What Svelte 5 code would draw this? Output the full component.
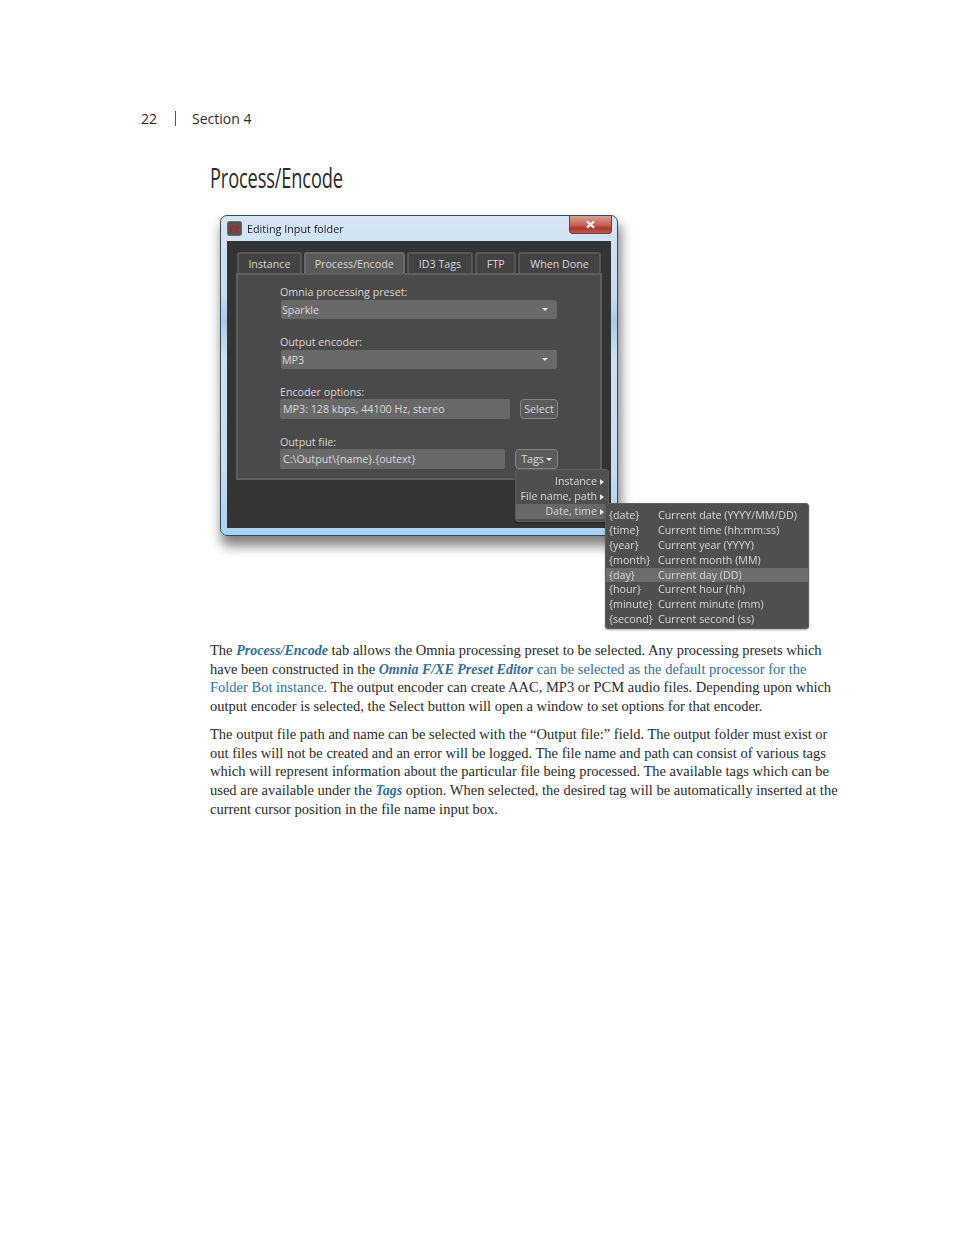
<script lang="ts">
    const tabs = [
        { label: "Instance", width: 65 },
        { label: "Process/Encode", width: 101, active: true },
        { label: "ID3 Tags", width: 67 },
        { label: "FTP", width: 41 },
        { label: "When Done", width: 83 },
    ];

    const tagMenu = [
        { label: "Instance" },
        { label: "File name, path" },
        { label: "Date, time", active: true },
    ];

    const dateTags = [
        { tag: "{date}", text: "Current date (YYYY/MM/DD)" },
        { tag: "{time}", text: "Current time (hh:mm:ss)" },
        { tag: "{year}", text: "Current year (YYYY)" },
        { tag: "{month}", text: "Current month (MM)" },
        { tag: "{day}", text: "Current day (DD)", active: true },
        { tag: "{hour}", text: "Current hour (hh)" },
        { tag: "{minute}", text: "Current minute (mm)" },
        { tag: "{second}", text: "Current second (ss)" },
    ];
</script>

<div class="page">
    <header class="running-head">
        <span class="folio">22</span>
        <span class="rule"></span>
        <span>Section 4</span>
    </header>

    <main class="content">
        <h1>Process/Encode</h1>

        <div class="figure">
            <div class="window">
                <div class="titlebar">
                    <svg class="app-icon" viewBox="0 0 14 14" aria-hidden="true">
                        <rect x="0.5" y="0.5" width="13" height="13" rx="2" fill="#5a5052" stroke="#6a6a6a" />
                        <text x="7" y="10" text-anchor="middle" font-size="8" font-weight="700" font-family="Liberation Sans, sans-serif" fill="#a8242c">F8</text>
                    </svg>
                    <span class="title">Editing Input folder</span>
                    <button class="close" type="button" aria-label="Close">
                        <svg viewBox="0 0 12 10" aria-hidden="true">
                            <path d="M2 1.5 L10 8.5 M10 1.5 L2 8.5" stroke="#ece8e6" stroke-width="2.6" fill="none" />
                        </svg>
                    </button>
                </div>

                <div class="client">
                    <div class="tabs">
                        {#each tabs as tab}
                            <div class="tab" class:active={tab.active} style={`width: ${tab.width}px`}>{tab.label}</div>
                        {/each}
                    </div>
                    <div class="panel">
                        <div class="field">
                            <div class="label">Omnia processing preset:</div>
                            <div class="select"><span>Sparkle</span><i class="caret"></i></div>
                        </div>
                        <div class="field">
                            <div class="label">Output encoder:</div>
                            <div class="select"><span>MP3</span><i class="caret"></i></div>
                        </div>
                        <div class="field">
                            <div class="label">Encoder options:</div>
                            <div class="input-row">
                                <div class="input options">MP3: 128 kbps, 44100 Hz, stereo</div>
                                <button class="btn select-btn" type="button">Select</button>
                            </div>
                        </div>
                        <div class="field">
                            <div class="label">Output file:</div>
                            <div class="input-row">
                                <div class="input outfile">C:\Output\{"{name}"}.{"{outext}"}</div>
                                <button class="btn tags-btn" type="button">Tags<i class="caret small"></i></button>
                            </div>
                        </div>
                    </div>
                </div>
            </div>

            <div class="menu tag-menu">
                {#each tagMenu as item}
                    <div class="menu-row" class:active={item.active}>
                        <span>{item.label}</span><i class="arrow"></i>
                    </div>
                {/each}
            </div>

            <div class="menu date-menu">
                {#each dateTags as item}
                    <div class="date-row" class:active={item.active}>
                        <span class="tag">{item.tag}</span>
                        <span>{item.text}</span>
                    </div>
                {/each}
            </div>
        </div>

        <p>
            <span class="line">The <b>Process/Encode</b> tab allows the Omnia processing preset to be selected. Any processing presets which</span>
            <span class="line">have been constructed in the <b>Omnia F/XE Preset Editor</b> <a href="#top">can be selected as the default processor for the</a></span>
            <span class="line"><a href="#top">Folder Bot instance.</a> The output encoder can create AAC, MP3 or PCM audio files. Depending upon which</span>
            <span class="line">output encoder is selected, the Select button will open a window to set options for that encoder.</span>
        </p>
        <p>
            <span class="line">The output file path and name can be selected with the “Output file:” field. The output folder must exist or</span>
            <span class="line">out files will not be created and an error will be logged. The file name and path can consist of various tags</span>
            <span class="line">which will represent information about the particular file being processed. The available tags which can be</span>
            <span class="line">used are available under the <b>Tags</b> option. When selected, the desired tag will be automatically inserted at the</span>
            <span class="line">current cursor position in the file name input box.</span>
        </p>
    </main>
</div>

<style>
    :global(body) {
        margin: 0;
        background: #fff;
    }

    .page {
        height: 1235px;
        box-sizing: border-box;
        padding: 109px 0 0 141px;
        color: #2b2a2a;
        overflow: hidden;
    }

    .running-head {
        display: flex;
        align-items: center;
        height: 18px;
        font-family: "Open Sans", sans-serif;
        font-size: 14px;
    }

    .folio {
        width: 34px;
    }

    .rule {
        width: 1px;
        height: 15px;
        background: #555;
        margin-right: 16px;
    }

    .content {
        margin-left: 69px;
        width: 640px;
    }

    h1 {
        margin: 0;
        padding-top: 32px;
        height: 37px;
        font-family: "Open Sans", sans-serif;
        font-size: 27px;
        line-height: 37px;
        font-weight: 400;
        letter-spacing: -0.2px;
        white-space: nowrap;
        transform: scaleX(0.675);
        transform-origin: left;
    }

    .figure {
        position: relative;
        height: 434px;
        padding: 19px 0 0 10px;
        box-sizing: border-box;
        font-family: "Open Sans", sans-serif;
        font-size: 10.7px;
        color: #d8d8d8;
        margin-bottom: 11px;
    }

    .window {
        width: 398px;
        height: 321px;
        box-sizing: border-box;
        padding: 0 6px 7px;
        border: 1px solid #3c4a58;
        border-radius: 7px;
        background: linear-gradient(180deg, #d6e6f5 0%, #c5dcf1 25%, #a7cdec 33%, #cfe2f3 45%, #c5dcf2 80%, #a9d2f2 100%);
        box-shadow: 2px 9px 12px 1px rgba(0, 0, 0, 0.5);
        display: flex;
        flex-direction: column;
        filter: blur(0.4px);
    }

    .titlebar {
        height: 25px;
        flex: none;
        display: flex;
        align-items: center;
        gap: 5px;
        color: #1a1a1a;
        font-size: 10.8px;
    }

    .app-icon {
        width: 15px;
        height: 15px;
        flex: none;
    }

    .close {
        margin: -7px -1px 0 auto;
        width: 43px;
        height: 18px;
        padding: 0;
        border: 1px solid #7a3a38;
        border-top: none;
        border-radius: 0 0 4px 4px;
        background: linear-gradient(180deg, #d4a29c 0%, #c8645a 50%, #a83a30 72%, #bc5a4e 100%);
        display: flex;
        align-items: center;
        justify-content: center;
    }

    .close svg {
        width: 11px;
        height: 9px;
    }

    .client {
        flex: 1;
        background: #343434;
        padding: 11px 10px 0 9px;
    }

    .tabs {
        display: flex;
        gap: 2px;
        height: 21px;
        margin-left: 1px;
    }

    .tab {
        box-sizing: border-box;
        height: 21px;
        background: #434343;
        border: 2px solid #575757;
        border-bottom: none;
        border-radius: 3px 3px 0 0;
        text-align: center;
        line-height: 20px;
    }

    .tab.active {
        background: #5a5a5a;
        border-color: #6a6a6a;
    }

    .panel {
        box-sizing: border-box;
        height: 207px;
        width: 366px;
        background: #4a4a4a;
        border: 2px solid #5e5e5e;
        padding: 10px 0 0 42px;
    }

    .field {
        height: 50px;
    }

    .label {
        height: 15px;
        line-height: 15px;
    }

    .select {
        width: 276px;
        height: 19px;
        box-sizing: border-box;
        padding: 0 9px 0 1px;
        margin: 0 0 0 1px;
        background: #696969;
        border-radius: 2px;
        display: flex;
        align-items: center;
        justify-content: space-between;
    }

    .input-row {
        display: flex;
        align-items: center;
        margin-top: -1px;
    }

    .input {
        box-sizing: border-box;
        height: 20px;
        line-height: 20px;
        padding-left: 3px;
        background: #686868;
        border-radius: 2px;
    }

    .options {
        width: 230px;
        margin-right: 10px;
    }

    .outfile {
        width: 225px;
        margin-right: 10px;
    }

    .btn {
        height: 20px;
        padding: 0;
        box-sizing: border-box;
        border: 1px solid #868686;
        border-radius: 4px;
        background: #5b5b5b;
        color: #d8d8d8;
        font: inherit;
    }

    .select-btn {
        width: 38px;
    }

    .tags-btn {
        width: 43px;
    }

    .caret {
        display: inline-block;
        width: 0;
        height: 0;
        border-left: 3.5px solid transparent;
        border-right: 3.5px solid transparent;
        border-top: 3.5px solid #e6e6e6;
    }

    .caret.small {
        border-left-width: 3px;
        border-right-width: 3px;
        border-top-width: 3px;
        margin-left: 2px;
        vertical-align: 2px;
    }

    .menu {
        position: absolute;
        box-sizing: border-box;
        background: #4f4f4f;
        border: 1px solid #5f5f5f;
        border-radius: 3px;
        box-shadow: 0 1px 2px rgba(0, 0, 0, 0.35);
        filter: blur(0.4px);
    }

    .tag-menu {
        left: 305px;
        top: 273px;
        width: 94px;
        height: 53px;
        padding-top: 4px;
    }

    .menu-row {
        height: 15px;
        line-height: 15px;
        display: flex;
        justify-content: flex-end;
        align-items: center;
        gap: 3px;
        padding-right: 4px;
    }

    .menu-row.active {
        background: #686868;
    }

    .arrow {
        width: 0;
        height: 0;
        border-top: 3px solid transparent;
        border-bottom: 3px solid transparent;
        border-left: 4px solid #e6e6e6;
    }

    .date-menu {
        left: 395px;
        top: 307px;
        width: 204px;
        height: 126px;
        padding-top: 4px;
    }

    .date-row {
        height: 14.9px;
        line-height: 14.9px;
        display: flex;
        padding-left: 3px;
        white-space: nowrap;
    }

    .date-row.active {
        background: #6c6c6c;
    }

    .tag {
        width: 49px;
        flex: none;
    }

    p {
        margin: 0 0 9.4px;
        font-family: "Liberation Serif", serif;
        font-size: 14.5px;
        line-height: 18.65px;
        color: #2b2a2a;
    }

    .line {
        display: block;
        height: 18.65px;
        white-space: nowrap;
    }

    p b {
        font-size: 14px;
        font-style: italic;
        color: #2f6f97;
    }

    p a {
        color: #2f6f97;
        text-decoration: none;
    }
</style>
